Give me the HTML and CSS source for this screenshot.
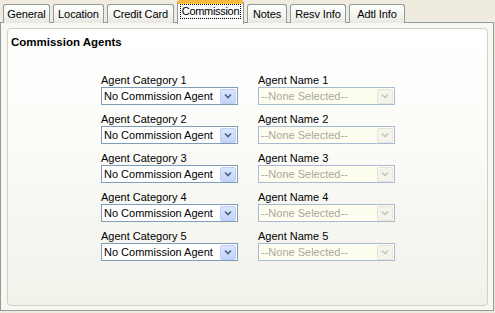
FILE: index.html
```html
<!DOCTYPE html>
<html>
<head>
<meta charset="utf-8">
<link rel="stylesheet" href="styles.css">
</head>
<body>
<div class="window">
  <div class="tabs">
    <div class="tab">General</div>
    <div class="tab">Location</div>
    <div class="tab">Credit Card</div>
    <div class="tab active"><span class="focus">Commission</span></div>
    <div class="tab">Notes</div>
    <div class="tab">Resv Info</div>
    <div class="tab">Adtl Info</div>
  </div>
  <div class="panel">
    <div class="group">
      <div class="title">Commission Agents</div>
      <div class="grid">
        <div class="field"><div class="label">Agent Category 1</div><div class="select"><span class="val">No Commission Agent</span><span class="btn"><svg viewBox="0 0 8 6" width="8" height="6"><path d="M1 1.5 L4 4.5 L7 1.5" fill="none" stroke="#4d6185" stroke-width="1.6"/></svg></span></div></div>
        <div class="field"><div class="label">Agent Name 1</div><div class="select disabled"><span class="val">--None Selected--</span><span class="btn"><svg viewBox="0 0 8 6" width="8" height="6"><path d="M1 1.5 L4 4.5 L7 1.5" fill="none" stroke="#c9c7ba" stroke-width="1.6"/></svg></span></div></div>
        <div class="field"><div class="label">Agent Category 2</div><div class="select"><span class="val">No Commission Agent</span><span class="btn"><svg viewBox="0 0 8 6" width="8" height="6"><path d="M1 1.5 L4 4.5 L7 1.5" fill="none" stroke="#4d6185" stroke-width="1.6"/></svg></span></div></div>
        <div class="field"><div class="label">Agent Name 2</div><div class="select disabled"><span class="val">--None Selected--</span><span class="btn"><svg viewBox="0 0 8 6" width="8" height="6"><path d="M1 1.5 L4 4.5 L7 1.5" fill="none" stroke="#c9c7ba" stroke-width="1.6"/></svg></span></div></div>
        <div class="field"><div class="label">Agent Category 3</div><div class="select"><span class="val">No Commission Agent</span><span class="btn"><svg viewBox="0 0 8 6" width="8" height="6"><path d="M1 1.5 L4 4.5 L7 1.5" fill="none" stroke="#4d6185" stroke-width="1.6"/></svg></span></div></div>
        <div class="field"><div class="label">Agent Name 3</div><div class="select disabled"><span class="val">--None Selected--</span><span class="btn"><svg viewBox="0 0 8 6" width="8" height="6"><path d="M1 1.5 L4 4.5 L7 1.5" fill="none" stroke="#c9c7ba" stroke-width="1.6"/></svg></span></div></div>
        <div class="field"><div class="label">Agent Category 4</div><div class="select"><span class="val">No Commission Agent</span><span class="btn"><svg viewBox="0 0 8 6" width="8" height="6"><path d="M1 1.5 L4 4.5 L7 1.5" fill="none" stroke="#4d6185" stroke-width="1.6"/></svg></span></div></div>
        <div class="field"><div class="label">Agent Name 4</div><div class="select disabled"><span class="val">--None Selected--</span><span class="btn"><svg viewBox="0 0 8 6" width="8" height="6"><path d="M1 1.5 L4 4.5 L7 1.5" fill="none" stroke="#c9c7ba" stroke-width="1.6"/></svg></span></div></div>
        <div class="field"><div class="label">Agent Category 5</div><div class="select"><span class="val">No Commission Agent</span><span class="btn"><svg viewBox="0 0 8 6" width="8" height="6"><path d="M1 1.5 L4 4.5 L7 1.5" fill="none" stroke="#4d6185" stroke-width="1.6"/></svg></span></div></div>
        <div class="field"><div class="label">Agent Name 5</div><div class="select disabled"><span class="val">--None Selected--</span><span class="btn"><svg viewBox="0 0 8 6" width="8" height="6"><path d="M1 1.5 L4 4.5 L7 1.5" fill="none" stroke="#c9c7ba" stroke-width="1.6"/></svg></span></div></div>
      </div>
    </div>
  </div>
</div>
</body>
</html>
```
FILE: styles.css
```css
* { box-sizing: border-box; }
html, body { margin: 0; padding: 0; }
body {
  width: 495px;
  height: 313px;
  background: #efecdf;
  font-family: "Liberation Sans", Arial, sans-serif;
  font-size: 11px;
  color: #000;
  overflow: hidden;
}
.window {
  display: flex;
  flex-direction: column;
  width: 494px;
  height: 311px;
}
.tabs {
  display: grid;
  grid-template-columns: 47px 51px 67px 67px 40px 56px 56px;
  column-gap: 3px;
  align-items: end;
  height: 22px;
  padding-left: 3px;
  position: relative;
  z-index: 1;
}
.tab {
  height: 19px;
  display: flex;
  align-items: center;
  justify-content: center;
  border: 1px solid #919b9c;
  border-bottom: none;
  border-radius: 3px 3px 0 0;
  background: linear-gradient(#ffffff, #f3f3ef 60%, #e8e7e1);
  white-space: nowrap;
  letter-spacing: -0.1px;
}
.tab.active {
  height: 24px;
  margin-bottom: -1px;
  background: #fcfcfe;
  border-top: 3px solid #f5b941;
  box-shadow: inset 0 1px 0 #ffc73c;
  align-items: flex-start;
  padding-top: 1px;
  letter-spacing: -0.3px;
}
.focus {
  border: 1px dotted #000;
  padding: 0 1px;
  line-height: 13px;
}
.panel {
  flex: 1;
  border: 1px solid #919b9c;
  background: #f8f7f2;
  padding: 5px 5px 4px 6px;
  display: flex;
}
.group {
  flex: 1;
  border: 1px solid #d0d0bf;
  border-radius: 4px;
  background: linear-gradient(#ffffff, #fbfbf8 40%, #f2f1ea);
  display: flex;
  flex-direction: column;
}
.title {
  font-weight: bold;
  font-size: 11.5px;
  padding: 6px 0 0 3px;
  line-height: 14px;
}
.grid {
  display: grid;
  grid-template-columns: 137px 137px;
  column-gap: 20px;
  row-gap: 5px;
  justify-content: center;
  padding-top: 22px;
  padding-left: 1px;
}
.field {
  display: flex;
  flex-direction: column;
  height: 34px;
}
.label {
  line-height: 14px;
  height: 16px;
  padding-top: 2px;
}
.select {
  height: 18px;
  border: 1px solid #7f9db9;
  background: #fff;
  display: flex;
  align-items: center;
  padding: 0 1px 0 2px;
}
.val { flex: 1; white-space: nowrap; }
.btn {
  width: 16px;
  height: 15px;
  border-radius: 2px;
  background: linear-gradient(#dce7fe, #c3d4fb);
  border: 1px solid #bccef8;
  display: flex;
  align-items: center;
  justify-content: center;
}
.select.disabled {
  background: #fdfdf0;
  border-color: #a9bbd3;
  color: #aca899;
}
.select.disabled .btn {
  background: #f4f3ec;
  border-color: #e6e5dc;
}
```
